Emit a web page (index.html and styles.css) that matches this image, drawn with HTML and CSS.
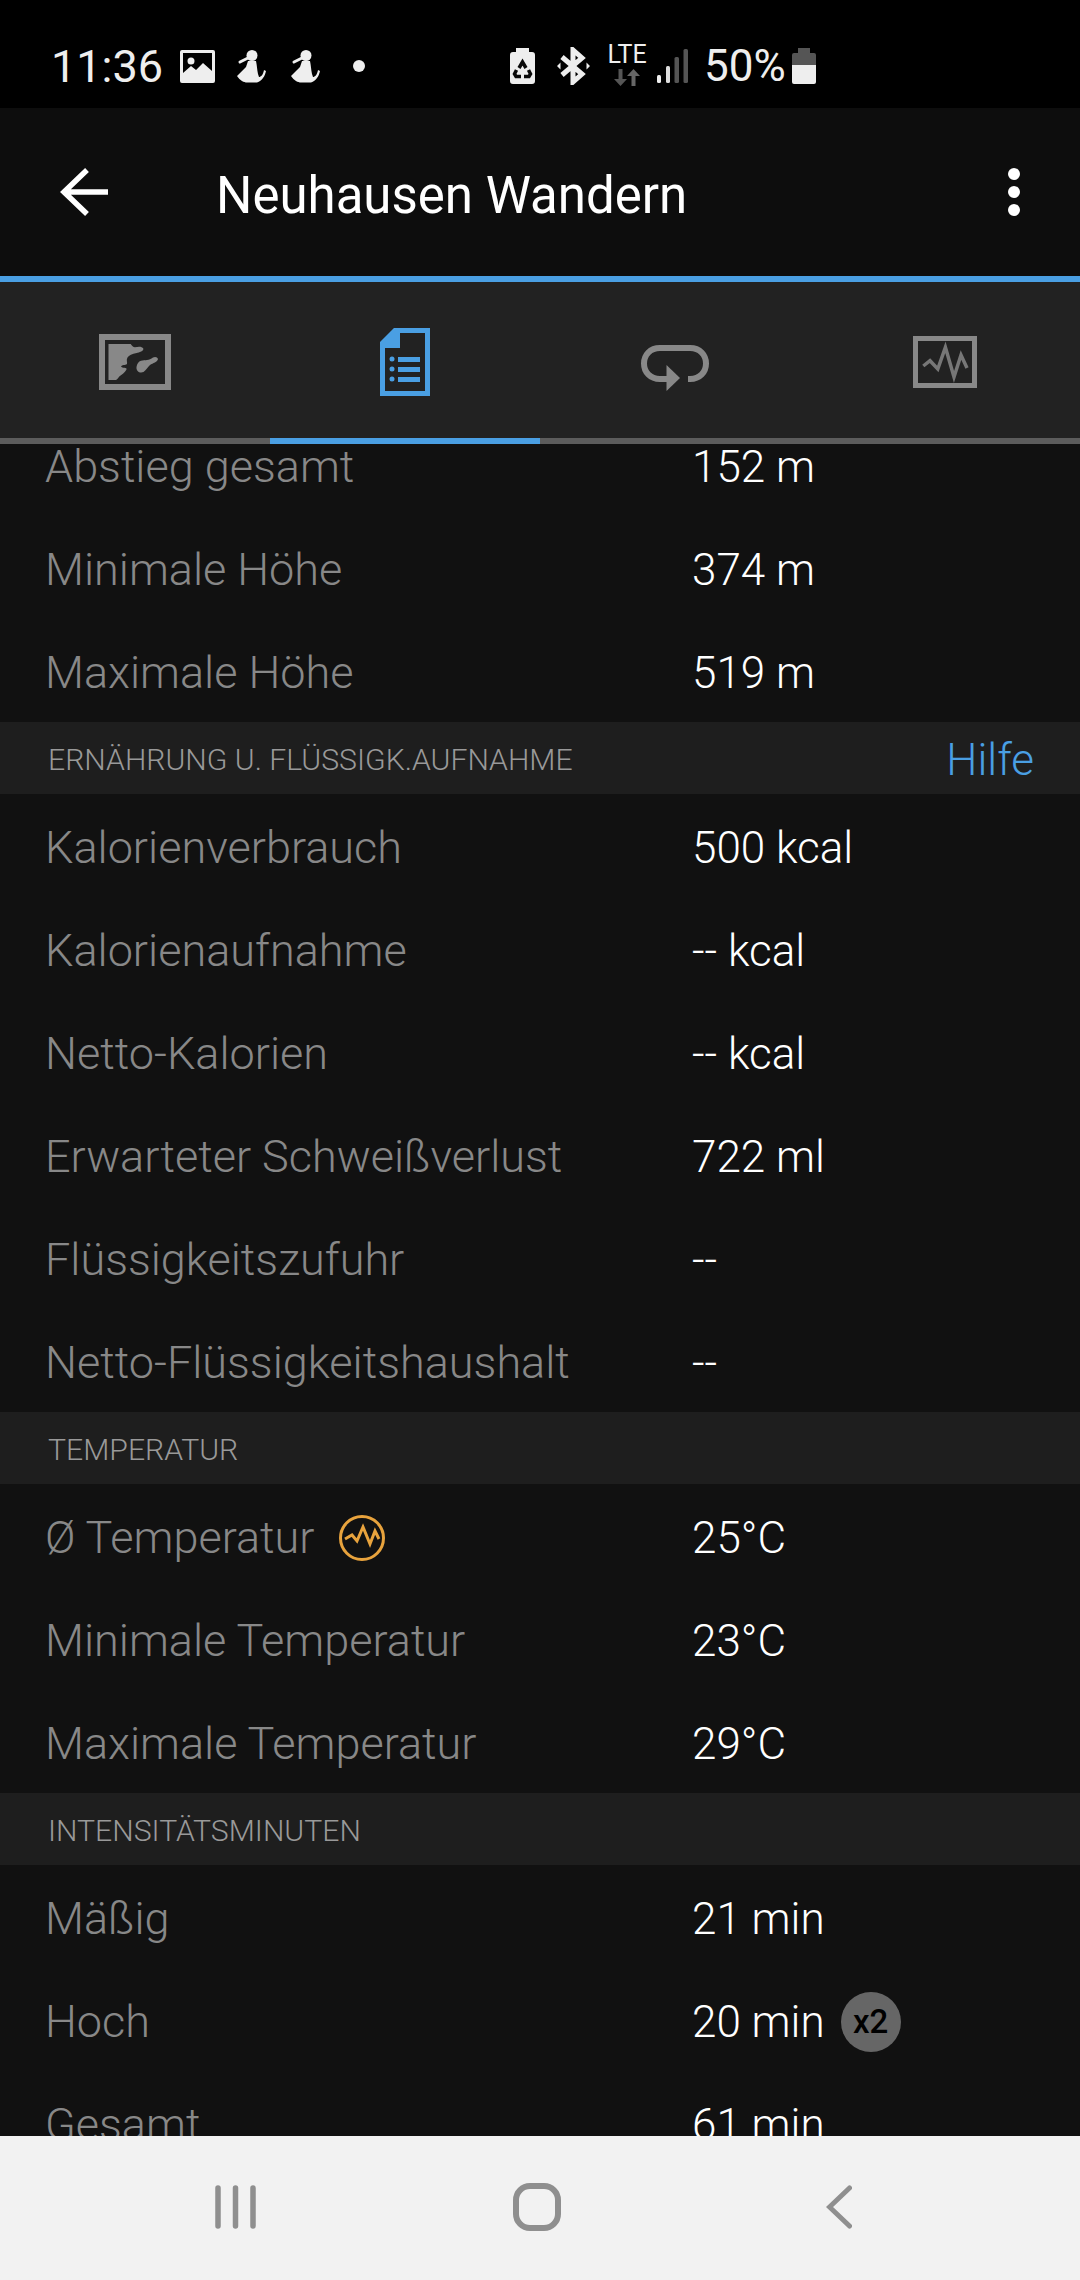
FILE: index.html
```html
<!DOCTYPE html>
<html lang="de">
<head>
    <meta charset="UTF-8">
    <meta name="viewport" content="width=device-width, initial-scale=1.0">
    <title>Neuhausen Wandern</title>
    <link rel="stylesheet" href="styles.css">
</head>
<body>
    <div class="screen">
        <!-- Status bar -->
        <div class="status-bar">
            <span class="clock">11:36</span>
            <svg class="st-img" width="35" height="33" viewBox="0 0 35 33">
                <path fill="#eee" fill-rule="evenodd" d="M2 0h31a2 2 0 0 1 2 2v29a2 2 0 0 1-2 2H2a2 2 0 0 1-2-2V2a2 2 0 0 1 2-2zM3 3v20l8-7 5 4 7-7 9 8V3zM11 7.500a3.500 3.500 0 1 1 0 7 3.500 3.500 0 0 1 0-7z"/>
            </svg>
            <svg class="st-person" width="30" height="33" viewBox="0 0 30 33">
                <circle cx="16" cy="5.500" r="5.500" fill="#eee"/>
                <path fill="none" stroke="#eee" stroke-width="3" stroke-linecap="round" d="M12 8 4 12"/>
                <path fill="#eee" d="M12 11h8c1 4 1 9 2 13l1 3c2 0 4-2 5-7l2 1c-1 5-4 10-9 11.500H11c-3 0-7-2-10-6.500l9-9z"/>
            </svg>
            <svg class="st-person" width="30" height="33" viewBox="0 0 30 33">
                <circle cx="16" cy="5.500" r="5.500" fill="#eee"/>
                <path fill="none" stroke="#eee" stroke-width="3" stroke-linecap="round" d="M12 8 4 12"/>
                <path fill="#eee" d="M12 11h8c1 4 1 9 2 13l1 3c2 0 4-2 5-7l2 1c-1 5-4 10-9 11.500H11c-3 0-7-2-10-6.500l9-9z"/>
            </svg>
            <span class="st-dot"></span>
            <svg class="st-recycle" width="25" height="36" viewBox="0 0 25 36">
                <path fill="#eee" d="M6 0h13v4h3a3 3 0 0 1 3 3v26a3 3 0 0 1-3 3H3a3 3 0 0 1-3-3V7a3 3 0 0 1 3-3h3z"/>
                <path fill="none" stroke="#0a0a0a" stroke-width="3.500" d="M9 20l3.500-6 3.500 6M6.500 22 4.500 26l1.500 2.500h5M14 28.500h5l1.500-2.500-2-4"/>
            </svg>
            <svg class="st-bt" width="33" height="38" viewBox="0 0 33 38">
                <path fill="none" stroke="#eee" stroke-width="5" d="M5 10 25 27 16 35V3l9 8L5 28"/>
                <path fill="#eee" d="M0 19l3.500-3.500v7zM33 19l-3.500-3.500v7z"/>
            </svg>
            <div class="st-lte">
                <span class="lte-text">LTE</span>
                <svg width="26" height="17" viewBox="0 0 26 17">
                    <path fill="#555" d="M4.500 0h4v10h4.500l-6.500 7L0 10h4.500z"/>
                    <path fill="#666" d="M17.500 17h4V7H26L19.500 0 13 7h4.500z"/>
                </svg>
            </div>
            <svg class="st-signal" width="32" height="34" viewBox="0 0 32 34">
                <rect x="1" y="26" width="4" height="8" rx="1.500" fill="#eee"/>
                <rect x="10" y="17" width="4" height="17" rx="1.500" fill="#ddd"/>
                <rect x="18.500" y="8" width="4.500" height="26" rx="1.500" fill="#555"/>
                <rect x="27.500" y="0" width="4.500" height="34" rx="1.500" fill="#555"/>
            </svg>
            <span class="battery-pct">50%</span>
            <svg class="st-battery" width="24" height="36" viewBox="0 0 24 36">
                <path fill="#555" d="M6 0h12v5h4a2 2 0 0 1 2 2v10H0V7a2 2 0 0 1 2-2h4z"/>
                <path fill="#eee" d="M0 17h24v17a2 2 0 0 1-2 2H2a2 2 0 0 1-2-2z"/>
            </svg>
        </div>

        <!-- App bar -->
        <div class="app-bar">
            <svg class="back-icon" width="48" height="48" viewBox="0 0 48 48">
                <path fill="none" stroke="#fff" stroke-width="5.500" d="M48 24H4M27 2 4 24l23 22"/>
            </svg>
            <h1 class="title">Neuhausen Wandern</h1>
            <svg class="menu-icon" width="12" height="48" viewBox="0 0 12 48">
                <circle cx="6" cy="6" r="6" fill="#fff"/>
                <circle cx="6" cy="24" r="6" fill="#fff"/>
                <circle cx="6" cy="42" r="6" fill="#fff"/>
            </svg>
        </div>

        <!-- Tabs -->
        <div class="tabs">
            <div class="tab">
                <svg width="72" height="56" viewBox="0 0 72 56">
                    <rect x="3" y="3" width="66" height="50" fill="none" stroke="#888" stroke-width="6"/>
                    <path fill="#888" d="M9.500 10H31.700C33 12 34 13 36 13.200 39 12.500 43 12 44.300 14.500 45 17 40 18.500 37.700 19 33 20 30 21 28.500 23.500 27 26 28.500 28 28 30 26 31.500 23 30.500 22 32.500 23 34.500 28.500 33 27.500 35.500 26 39 22 41 20.300 42.500 18.500 44.500 18 46 16.500 46H9.500z"/>
                    <path fill="#888" d="M37.500 33C38 30 39.500 27.500 42 26.800 46 26 50 26.500 54 23.500 56 22.300 58.500 23 59 25 58.500 28 54 29 51 31 48.500 33 47.500 36 44.500 38 41 39.500 37 37.500 37.500 33z"/>
                </svg>
            </div>
            <div class="tab active">
                <svg width="50" height="68" viewBox="0 0 50 68">
                    <path fill="none" stroke="#4a9fe3" stroke-width="5" d="M2.500 65.500V15L15 2.500h32.500v63z"/>
                    <path fill="#4a9fe3" d="M2 14 14 2h6v18H2z"/>
                    <circle cx="12" cy="31" r="2.500" fill="#4a9fe3"/>
                    <circle cx="12" cy="41" r="2.500" fill="#4a9fe3"/>
                    <circle cx="12" cy="51" r="2.500" fill="#4a9fe3"/>
                    <rect x="18" y="29" width="22" height="5" fill="#4a9fe3"/>
                    <rect x="18" y="39" width="22" height="5" fill="#4a9fe3"/>
                    <rect x="18" y="49" width="22" height="5" fill="#4a9fe3"/>
                </svg>
            </div>
            <div class="tab">
                <svg class="loop-icon" width="68" height="46" viewBox="0 0 68 46">
                    <path fill="none" stroke="#888" stroke-width="6" d="M26 34H19C9 34 3 27 3 18.500S9 3 19 3h30c10 0 16 7 16 15.500S59 34 49 34h-2"/>
                    <path fill="#888" d="M25.500 20 39 33 25.500 46z"/>
                </svg>
            </div>
            <div class="tab">
                <svg width="64" height="52" viewBox="0 0 64 52">
                    <rect x="2.500" y="2.500" width="59" height="47" fill="none" stroke="#888" stroke-width="5"/>
                    <path fill="none" stroke="#777" stroke-width="3.500" d="M10.300 30 17 24.700 24.800 33 32.400 11.300 41 41 48 19 54 32"/>
                </svg>
            </div>
        </div>

        <!-- Scrolled list -->
        <div class="content">
            <div class="list">
                <div class="row"><span class="label">Abstieg gesamt</span><span class="value">152 m</span></div>
                <div class="row"><span class="label">Minimale Höhe</span><span class="value">374 m</span></div>
                <div class="row"><span class="label">Maximale Höhe</span><span class="value">519 m</span></div>

                <div class="section"><span>ERNÄHRUNG U. FLÜSSIGK.AUFNAHME</span><span class="help">Hilfe</span></div>
                <div class="row"><span class="label">Kalorienverbrauch</span><span class="value">500 kcal</span></div>
                <div class="row"><span class="label">Kalorienaufnahme</span><span class="value">-- kcal</span></div>
                <div class="row"><span class="label">Netto-Kalorien</span><span class="value">-- kcal</span></div>
                <div class="row"><span class="label">Erwarteter Schweißverlust</span><span class="value">722 ml</span></div>
                <div class="row"><span class="label">Flüssigkeitszufuhr</span><span class="value">--</span></div>
                <div class="row"><span class="label">Netto-Flüssigkeitshaushalt</span><span class="value">--</span></div>

                <div class="section"><span>TEMPERATUR</span></div>
                <div class="row">
                    <span class="label with-icon">Ø Temperatur
                        <svg width="46" height="46" viewBox="0 0 46 46">
                            <circle cx="23" cy="23" r="21.500" fill="none" stroke="#e8a33d" stroke-width="3"/>
                            <path fill="none" stroke="#e8a33d" stroke-width="3" d="M6 24l7-4 5 6 6-14 7 17 5-13 4 8"/>
                        </svg>
                    </span>
                    <span class="value">25°C</span>
                </div>
                <div class="row"><span class="label">Minimale Temperatur</span><span class="value">23°C</span></div>
                <div class="row"><span class="label">Maximale Temperatur</span><span class="value">29°C</span></div>

                <div class="section"><span>INTENSITÄTSMINUTEN</span></div>
                <div class="row"><span class="label">Mäßig</span><span class="value">21 min</span></div>
                <div class="row"><span class="label">Hoch</span><span class="value">20 min<span class="badge">x2</span></span></div>
                <div class="row"><span class="label">Gesamt</span><span class="value">61 min</span></div>
            </div>
        </div>

        <!-- Android nav -->
        <div class="nav-bar">
            <svg width="41" height="44" viewBox="0 0 41 44">
                <path fill="none" stroke="#8f8f8f" stroke-width="5.500" stroke-linecap="round" d="M3 3v38M20.500 3v38M38 3v38"/>
            </svg>
            <svg width="48" height="48" viewBox="0 0 48 48">
                <rect x="3" y="3" width="42" height="42" rx="14" fill="none" stroke="#8f8f8f" stroke-width="6"/>
            </svg>
            <svg class="nav-back" width="26" height="44" viewBox="0 0 26 44">
                <path fill="none" stroke="#8f8f8f" stroke-width="5" stroke-linecap="round" d="M23.500 3 3.500 22l20 19"/>
            </svg>
        </div>
    </div>
</body>
</html>
```

FILE: styles.css
```css
* {
    box-sizing: border-box;
}
body {
    margin: 0;
    background-color: #111;
    font-family: 'Roboto', sans-serif;
}
.screen {
    width: 1080px;
    height: 2280px;
    display: flex;
    flex-direction: column;
    overflow: hidden;
}
.status-bar {
    height: 108px;
    flex: none;
    background-color: #000;
    color: #eee;
    display: flex;
    align-items: center;
    padding: 24px 0 0 51px;
}
.clock {
    font-size: 45px;
    width: 129px;
}
.st-person {
    margin-left: 21px;
}
.st-person + .st-person {
    margin-left: 24px;
}
.st-dot {
    width: 12px;
    height: 12px;
    border-radius: 50%;
    background-color: #eee;
    margin-left: 33px;
}
.st-recycle {
    margin-left: 145px;
}
.st-bt {
    margin-left: 22px;
}
.st-lte {
    margin-left: 19px;
    width: 36px;
    display: flex;
    flex-direction: column;
    align-items: center;
    gap: 5px;
}
.lte-text {
    font-size: 25px;
    line-height: 18px;
}
.st-signal {
    margin-left: 11px;
}
.battery-pct {
    font-size: 44px;
    margin-left: 16px;
    width: 80px;
}
.st-battery {
    margin-left: 8px;
}
.app-bar {
    height: 174px;
    flex: none;
    background-color: #0d0d0d;
    border-bottom: 6px solid #4a9fe3;
    display: flex;
    align-items: center;
    padding: 0 60px 0 60px;
    color: #fff;
}
.title {
    margin: 6px 0 0 108px;
    font-size: 51px;
    font-weight: 400;
    flex: 1;
}
.tabs {
    height: 162px;
    flex: none;
    background-color: #222;
    display: flex;
}
.tab {
    flex: 1;
    display: flex;
    align-items: center;
    justify-content: center;
    padding-top: 4px;
    border-bottom: 6px solid #5c5c5c;
}
.tab.active {
    border-bottom-color: #4a9fe3;
}
.loop-icon {
    margin-top: 12px;
}
.content {
    flex: 1;
    min-height: 0;
    overflow: hidden;
    background-color: #111;
}
.list {
    margin-top: -31px;
}
.row {
    height: 103px;
    display: grid;
    grid-template-columns: 647px 1fr;
    align-items: center;
    padding: 4px 0 0 45px;
    font-size: 45px;
    font-weight: 300;
}
.label {
    color: #888;
}
.with-icon {
    display: flex;
    align-items: center;
    gap: 25px;
}
.value {
    color: #fff;
    font-size: 44px;
    display: flex;
    align-items: center;
    gap: 16px;
}
.badge {
    width: 60px;
    height: 60px;
    border-radius: 50%;
    background-color: #666;
    color: #000;
    font-size: 33px;
    font-weight: 500;
    display: flex;
    align-items: center;
    justify-content: center;
}
.section {
    height: 72px;
    padding: 2px 46px 0 48px;
    background-color: #1e1e1e;
    color: #999;
    font-size: 30.2px;
    font-weight: 300;
    display: flex;
    align-items: center;
    justify-content: space-between;
}
.help {
    color: #4a9fe3;
    font-size: 44px;
    padding-top: 2px;
}
.nav-bar {
    height: 144px;
    flex: none;
    background-color: #f2f2f2;
    display: flex;
    align-items: center;
    padding: 0 0 2px 215px;
    gap: 257px;
}
.nav-back {
    margin-left: 8px;
}
```
